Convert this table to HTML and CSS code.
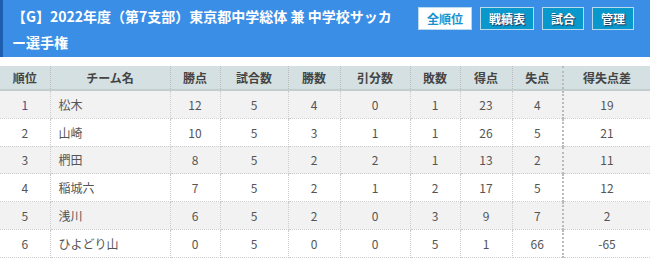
FILE: index.html
```html
<!DOCTYPE html>
<html lang="ja">
<head>
<meta charset="utf-8">
<link rel="stylesheet" href="styles.css">
</head>
<body>
<header class="bar">
  <h1 class="title">【G】2022年度（第7支部）東京都中学総体 兼 中学校サッカー選手権</h1>
  <nav class="btns">
    <a class="btn btn-active">全順位</a>
    <a class="btn">戦績表</a>
    <a class="btn">試合</a>
    <a class="btn">管理</a>
  </nav>
</header>
<table class="rank">
  <colgroup>
    <col class="c50"><col class="c120"><col class="c50"><col class="c68"><col class="c52"><col class="c70"><col class="c50"><col class="c52"><col class="c51"><col class="c87">
  </colgroup>
  <thead>
    <tr><th>順位</th><th>チーム名</th><th>勝点</th><th>試合数</th><th>勝数</th><th>引分数</th><th>敗数</th><th>得点</th><th class="sep">失点</th><th>得失点差</th></tr>
  </thead>
  <tbody>
    <tr class="odd"><td class="first">1</td><td class="name">松木</td><td>12</td><td>5</td><td>4</td><td>0</td><td>1</td><td>23</td><td class="sep">4</td><td>19</td></tr>
    <tr><td>2</td><td class="name">山崎</td><td>10</td><td>5</td><td>3</td><td>1</td><td>1</td><td>26</td><td class="sep">5</td><td>21</td></tr>
    <tr class="odd"><td>3</td><td class="name">椚田</td><td>8</td><td>5</td><td>2</td><td>2</td><td>1</td><td>13</td><td class="sep">2</td><td>11</td></tr>
    <tr><td>4</td><td class="name">稲城六</td><td>7</td><td>5</td><td>2</td><td>1</td><td>2</td><td>17</td><td class="sep">5</td><td>12</td></tr>
    <tr class="odd"><td>5</td><td class="name">浅川</td><td>6</td><td>5</td><td>2</td><td>0</td><td>3</td><td>9</td><td class="sep">7</td><td>2</td></tr>
    <tr><td>6</td><td class="name">ひよどり山</td><td>0</td><td>5</td><td>0</td><td>0</td><td>5</td><td>1</td><td class="sep">66</td><td>-65</td></tr>
  </tbody>
</table>
</body>
</html>
```
FILE: styles.css
```css
html, body {
  margin: 0;
  padding: 0;
  background: #fff;
  font-family: "Noto Sans CJK JP", "Noto Sans", sans-serif;
}
.bar {
  display: flex;
  justify-content: space-between;
  align-items: flex-start;
  background: #3a8ee6;
  border-left: 3px solid #1b5fae;
  height: 57px;
  box-sizing: border-box;
  padding: 3px 16px 0 9px;
}
.title {
  margin: 0;
  width: 382px;
  color: #fff;
  font-size: 14px;
  font-weight: bold;
  line-height: 26px;
}
.btns {
  display: flex;
  gap: 8px;
  padding-top: 4px;
}
.btn {
  display: block;
  height: 23px;
  box-sizing: border-box;
  padding: 0 8px;
  line-height: 21px;
  font-size: 12px;
  font-weight: bold;
  color: #fff;
  background: #0898cc;
  border: 1px solid #b9d9ee;
  text-shadow: 1px 1px 1px #235;
}
.btn-active {
  background: #fff;
  color: #1a8fd0;
  text-shadow: none;
}
.rank {
  margin-top: 9px;
  width: 650px;
  table-layout: fixed;
  border-collapse: collapse;
  font-size: 12px;
  color: #555;
}
.c50 { width: 50px; }
.c120 { width: 120px; }
.c68 { width: 68px; }
.c52 { width: 52px; }
.c70 { width: 70px; }
.c51 { width: 51px; }
.c87 { width: 87px; }
.rank th {
  background: #d4e0e1;
  color: #444;
  font-weight: bold;
  height: 23px;
  padding: 0;
  border-right: 1px dotted #bbb;
  border-bottom: 2px solid #c3cdcd;
}
.rank td {
  height: 26.8px;
  padding: 0;
  text-align: center;
  border-right: 1px dotted #ccc;
  border-bottom: 1px dotted #ccc;
}
.rank th:last-child, .rank td:last-child { border-right: none; }
.rank .sep { border-right: 2px dotted #bbb; }
.rank td.name { text-align: left; padding-left: 8px; }
.rank td.first { color: #5a4a8a; }
.odd td { background: #f2f2f2; }
```
